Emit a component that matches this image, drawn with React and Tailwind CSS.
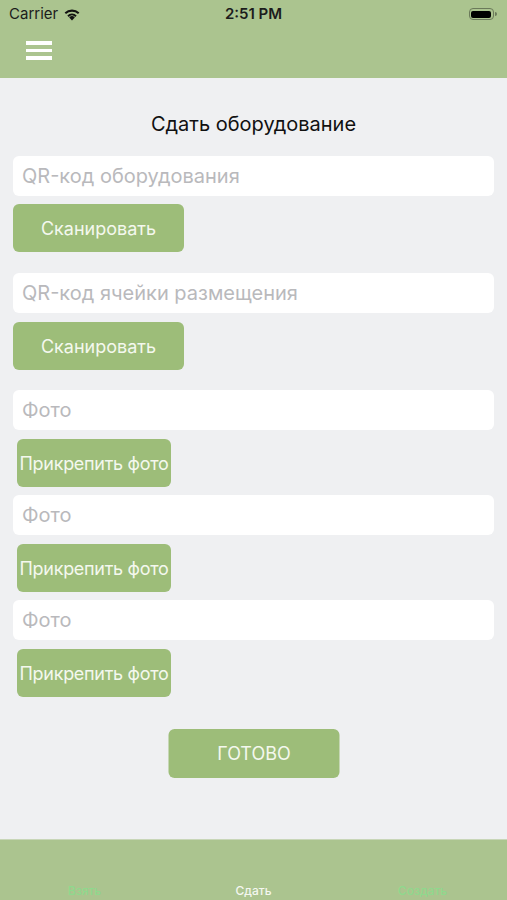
// Screen: hand-in equipment form (Сдать оборудование)

function StatusBar() {
  return (
    <div className="h-[28px] flex items-center justify-between px-[9px] text-[#1c1c1c]">
      <div className="flex items-center gap-[5px] w-[120px]">
        <span className="text-[15px]">Carrier</span>
        <svg width="18" height="13" viewBox="0 0 18 13">
          <path d="M9 12.5 L6.2 9.4 A4 4 0 0 1 11.8 9.4 Z" fill="#111" />
          <path d="M4.3 7.4 A6.8 6.8 0 0 1 13.7 7.4 L12.3 8.9 A4.8 4.8 0 0 0 5.7 8.9 Z" fill="#111" />
          <path d="M1.6 4.6 A10.6 10.6 0 0 1 16.4 4.6 L15 6.1 A8.6 8.6 0 0 0 3 6.1 Z" fill="#111" />
        </svg>
      </div>
      <span className="text-[15px] font-semibold">2:51 PM</span>
      <div className="w-[120px] flex justify-end pr-[1px]">
        <div className="flex items-center">
          <div className="w-[25px] h-[12px] rounded-[4px] border border-[#6b7a5a] p-[1.5px]">
            <div className="w-full h-full rounded-[2px] bg-black" />
          </div>
          <div className="w-[2px] h-[4px] bg-[#6b7a5a] rounded-r-sm ml-[1px]" />
        </div>
      </div>
    </div>
  );
}

function Field({ placeholder }) {
  return (
    <div className="h-[40px] bg-white rounded-[6px] flex items-center px-[9px] text-[20px] text-[#b9b9bc]">
      {placeholder}
    </div>
  );
}

function GreenButton({ children, className = "" }) {
  return (
    <div
      className={`h-[48px] bg-[#9dbd79] rounded-[6px] flex items-center justify-center text-[18px] text-[#f4f8ee] ${className}`}
    >
      {children}
    </div>
  );
}

export default function App() {
  return (
    <div
      className="h-[900px] flex flex-col bg-[#eff0f2]"
      style={{ fontFamily: "Inter, 'Noto Sans', sans-serif" }}
    >
      <header className="h-[78px] bg-[#abc48f]">
        <StatusBar />
        <div className="pt-[13px] px-[26px]">
          <div className="flex flex-col gap-[4px]">
            <div className="w-[26px] h-[3.5px] bg-white" />
            <div className="w-[26px] h-[3.5px] bg-white" />
            <div className="w-[26px] h-[3.5px] bg-white" />
          </div>
        </div>
      </header>

      <main className="flex-1 px-[13px] pt-[32px]">
        <h1 className="h-[28px] text-center text-[20px] leading-[28px] text-[#111]">Сдать оборудование</h1>

        <div className="mt-[18px] flex flex-col">
          <Field placeholder="QR-код оборудования" />
          <GreenButton className="mt-[8px] w-[171px]">Сканировать</GreenButton>

          <div className="mt-[21px]">
            <Field placeholder="QR-код ячейки размещения" />
          </div>
          <GreenButton className="mt-[9px] w-[171px]">Сканировать</GreenButton>

          {[0, 1, 2].map((i) => (
            <div key={i} className={i === 0 ? "mt-[20px]" : "mt-[8px]"}>
              <Field placeholder="Фото" />
              <GreenButton className="mt-[9px] ml-[4px] w-[154px] whitespace-nowrap tracking-[-0.3px]">
                Прикрепить фото
              </GreenButton>
            </div>
          ))}

          <div className="mt-[32px] flex justify-center">
            <GreenButton className="w-[171px] h-[49px] translate-x-[0.5px]">ГОТОВО</GreenButton>
          </div>
        </div>
      </main>

      <nav className="h-[61px] bg-[#abc48f] border-t border-[#c8d6b8] flex items-end text-[12px] font-medium">
        <div className="flex-1 text-center text-[#8fd98d]">Взять</div>
        <div className="flex-1 text-center text-[#f4f7ef]">Сдать</div>
        <div className="flex-1 text-center text-[#8fd98d]">Создать</div>
      </nav>
    </div>
  );
}
